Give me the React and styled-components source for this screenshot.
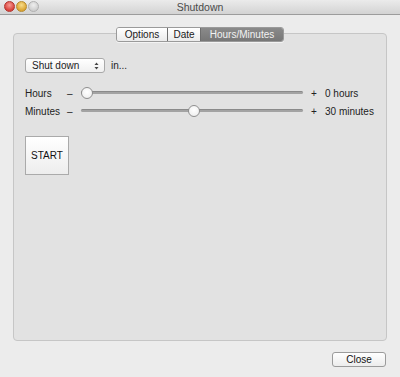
import React from "react";
import styled, { createGlobalStyle } from "styled-components";

const GlobalStyle = createGlobalStyle`
  html, body {
    margin: 0;
    padding: 0;
    background: #ececec;
  }
  body {
    font-family: "Liberation Sans", Arial, sans-serif;
    font-size: 10px;
    color: #222;
  }
`;

const Window = styled.div`
  width: 400px;
  height: 377px;
  display: flex;
  flex-direction: column;
  background: #ececec;
  overflow: hidden;
`;

const TitleBar = styled.div`
  position: relative;
  height: 14px;
  display: flex;
  align-items: center;
  justify-content: center;
  background: linear-gradient(#ebebeb, #d3d3d3);
  border-bottom: 1px solid #9c9c9c;
`;

const Lights = styled.div`
  position: absolute;
  left: 4px;
  top: 1px;
  display: flex;
  gap: 1px;
`;

const Light = styled.span`
  width: 11px;
  height: 11px;
  border-radius: 50%;
  box-sizing: border-box;
  border: 1px solid ${p => p.$edge};
  background: radial-gradient(circle at 50% 35%, ${p => p.$hi}, ${p => p.$color} 70%);
`;

const Title = styled.div`
  font-size: 10.5px;
  color: #4a4a4a;
`;

const Body = styled.div`
  flex: 1;
  display: flex;
  flex-direction: column;
  padding: 12px 13px 0 13px;
`;

const Tabs = styled.div`
  position: relative;
  z-index: 1;
  display: flex;
  align-self: center;
  height: 15px;
  box-sizing: border-box;
  border: 1px solid #9a9a9a;
  border-radius: 3px;
  overflow: hidden;
  box-shadow: 0 1px 0 rgba(255, 255, 255, 0.6);
`;

const Tab = styled.div`
  width: ${p => p.$w}px;
  display: flex;
  align-items: center;
  justify-content: center;
  font-size: 10px;
  color: ${p => (p.$active ? "#f2f2f2" : "#1a1a1a")};
  background: ${p => (p.$active ? "linear-gradient(#8a8a8a, #777)" : "linear-gradient(#ffffff, #ebebeb)")};
  & + & {
    border-left: 1px solid ${p => (p.$active ? "#6e6e6e" : "#c4c4c4")};
  }
`;

const Box = styled.div`
  flex: 1;
  margin-top: -9px;
  box-sizing: border-box;
  background: #e2e2e2;
  border: 1px solid #c6c6c6;
  border-radius: 4px;
  padding: 24px 11px 0 11px;
  display: flex;
  flex-direction: column;
`;

const ModeRow = styled.div`
  display: flex;
  align-items: center;
  gap: 6px;
`;

const Popup = styled.div`
  width: 80px;
  height: 15px;
  box-sizing: border-box;
  display: flex;
  align-items: center;
  justify-content: space-between;
  padding: 0 5px 0 6px;
  border: 1px solid #a9a9a9;
  border-radius: 3px;
  background: linear-gradient(#ffffff, #f0f0f0);
  font-size: 10px;
`;

const Sliders = styled.div`
  margin-top: 13px;
  display: flex;
  flex-direction: column;
  gap: 4px;
`;

const SliderRow = styled.div`
  display: grid;
  grid-template-columns: 40px 16px 222px 22px auto;
  align-items: center;
  height: 14px;
`;

const Sign = styled.span`
  text-align: ${p => (p.$center ? "center" : "left")};
  padding-left: ${p => (p.$center ? 0 : 2)}px;
  font-size: 10px;
`;

const Track = styled.div`
  position: relative;
  height: 14px;
  &::before {
    content: "";
    position: absolute;
    left: 0;
    right: 0;
    top: 5px;
    height: 3px;
    border-radius: 2px;
    background: #a3a3a3;
    border-top: 1px solid #8a8a8a;
    box-sizing: border-box;
  }
`;

const Thumb = styled.div`
  position: absolute;
  top: 1px;
  width: 12px;
  height: 12px;
  box-sizing: border-box;
  border-radius: 50%;
  border: 1px solid #8f8f8f;
  background: radial-gradient(circle at 50% 40%, #ffffff, #f1f1f1 70%, #e2e2e2);
`;

const StartButton = styled.div`
  margin-top: 18px;
  width: 44px;
  height: 39px;
  box-sizing: border-box;
  border: 1px solid #aaaaaa;
  background: linear-gradient(#ffffff, #ededed);
  display: flex;
  align-items: center;
  justify-content: center;
  font-size: 10px;
  color: #111;
`;

const Footer = styled.div`
  height: 36px;
  display: flex;
  align-items: center;
  justify-content: flex-end;
  padding-right: 14px;
`;

const PushButton = styled.div`
  width: 54px;
  height: 15px;
  box-sizing: border-box;
  border: 1px solid #9b9b9b;
  border-radius: 3px;
  background: linear-gradient(#ffffff, #ececec);
  display: flex;
  align-items: center;
  justify-content: center;
  font-size: 10px;
  color: #111;
`;

function Arrows() {
  return (
    <svg width="5" height="8" viewBox="0 0 5 8">
      <path d="M2.5 0.5 L4.5 3 L0.5 3 Z" fill="#444" />
      <path d="M2.5 7.5 L4.5 5 L0.5 5 Z" fill="#444" />
    </svg>
  );
}

function Slider({ label, value, max, unit }) {
  const left = (value / max) * 210;
  return (
    <SliderRow>
      <span>{label}</span>
      <Sign>–</Sign>
      <Track>
        <Thumb style={{ left: `${left}px` }} />
      </Track>
      <Sign $center>+</Sign>
      <span>
        {value} {unit}
      </span>
    </SliderRow>
  );
}

export default function App() {
  return (
    <Window>
      <GlobalStyle />
      <TitleBar>
        <Lights>
          <Light $color="#d9423b" $hi="#f79a93" $edge="#b0352f" />
          <Light $color="#dca532" $hi="#f7dc8a" $edge="#b78a2c" />
          <Light $color="#cfcfcf" $hi="#eeeeee" $edge="#b0b0b0" />
        </Lights>
        <Title>Shutdown</Title>
      </TitleBar>
      <Body>
        <Tabs>
          <Tab $w={50}>Options</Tab>
          <Tab $w={32}>Date</Tab>
          <Tab $w={82} $active>
            Hours/Minutes
          </Tab>
        </Tabs>
        <Box>
          <ModeRow>
            <Popup>
              <span>Shut down</span>
              <Arrows />
            </Popup>
            <span>in...</span>
          </ModeRow>
          <Sliders>
            <Slider label="Hours" value={0} max={23} unit="hours" />
            <Slider label="Minutes" value={30} max={59} unit="minutes" />
          </Sliders>
          <StartButton>START</StartButton>
        </Box>
      </Body>
      <Footer>
        <PushButton>Close</PushButton>
      </Footer>
    </Window>
  );
}
